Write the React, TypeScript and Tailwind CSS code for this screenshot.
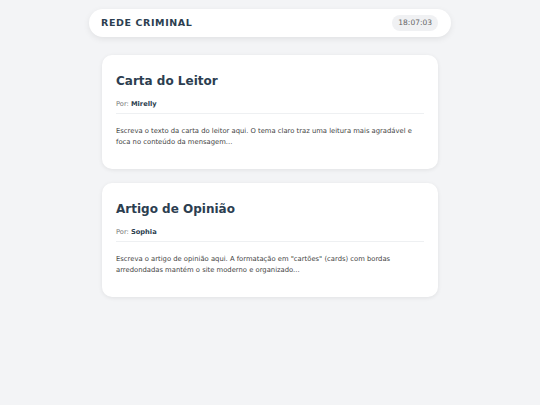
import React from "react";

const font = { fontFamily: '"DejaVu Sans", sans-serif' };

function Card({ title, author, body }: { title: string; author: string; body: string }) {
  return (
    <div className="w-[336px] rounded-[10px] bg-white px-[14px] pt-[18px] pb-[21px] shadow-[0_1px_4px_rgba(0,0,0,0.08)]">
      <h2 className="text-[12px] font-bold leading-[16px] text-[#2c3e50]">{title}</h2>
      <div className="mt-[10px] border-b border-[#eef0f2] pb-[4px] text-[6.7px] leading-[10px] text-[#777]">
        Por: <span className="font-bold text-[#2c3e50]">{author}</span>
      </div>
      <p className="mt-[12px] text-[6.8px] leading-[11px] text-[#444]">{body}</p>
    </div>
  );
}

export default function App() {
  return (
    <div className="min-h-[405px] w-full bg-[#f3f4f6]" style={font}>
      <div className="flex flex-col items-center pt-[9px]">
        <div className="flex h-[28px] w-[362px] items-center justify-between rounded-full bg-white pl-[12px] pr-[13px] shadow-[0_2px_6px_rgba(0,0,0,0.08)]">
          <span className="text-[9.5px] font-bold tracking-[0.6px] text-[#2c3e50]">REDE CRIMINAL</span>
          <span className="rounded-full bg-[#f0f1f3] px-[6px] py-[3px] text-[7.5px] leading-[10px] text-[#666]">18:07:03</span>
        </div>
        <div className="mt-[18px] flex flex-col gap-[14px]">
          <Card
            title="Carta do Leitor"
            author="Mirelly"
            body="Escreva o texto da carta do leitor aqui. O tema claro traz uma leitura mais agradável e foca no conteúdo da mensagem..."
          />
          <Card
            title="Artigo de Opinião"
            author="Sophia"
            body={'Escreva o artigo de opinião aqui. A formatação em "cartões" (cards) com bordas arredondadas mantém o site moderno e organizado...'}
          />
        </div>
      </div>
    </div>
  );
}
